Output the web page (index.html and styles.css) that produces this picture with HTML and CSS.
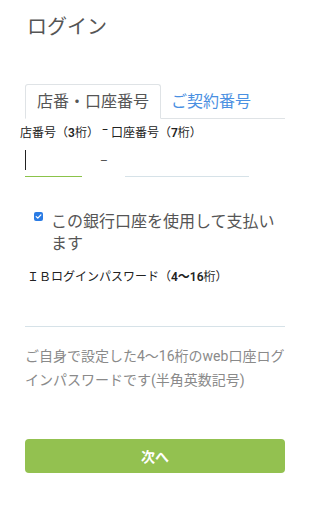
FILE: index.html
```html
<!DOCTYPE html>
<html lang="ja">
<head>
<meta charset="utf-8">
<title>ログイン</title>
<link rel="stylesheet" href="styles.css">
</head>
<body>
<main class="page">
  <h1 class="title">ログイン</h1>

  <nav class="tabs">
    <div class="tab tab-active">店番・口座番号</div>
    <div class="tab">ご契約番号</div>
  </nav>

  <div class="field-label field-label-shift">店番号（<span class="num">3</span>桁）<span class="sep">ｰ</span>口座番号（<span class="num">7</span>桁）</div>

  <div class="account-row">
    <div class="input input-branch input-focused"><span class="caret"></span></div>
    <span class="dash">–</span>
    <div class="input input-account"></div>
  </div>

  <label class="check-row">
    <span class="checkbox">
      <svg width="9" height="9" viewBox="0 0 9 9"><path d="M2.2 4.6 L3.8 6.1 L6.9 2.9" fill="none" stroke="#fff" stroke-width="1.3" stroke-linecap="round" stroke-linejoin="round"/></svg>
    </span>
    <span class="check-text">この銀行口座を使用して支払います</span>
  </label>

  <div class="field-label field-label-ib">ＩＢログインパスワード（<span class="num">4〜16</span>桁）</div>
  <div class="input input-password"></div>

  <p class="help">ご自身で設定した4〜16桁のweb口座ログインパスワードです(半角英数記号)</p>

  <button class="btn-next" type="button">次へ</button>
</main>
</body>
</html>
```

FILE: styles.css
```css
* {
  box-sizing: border-box;
}

html, body {
  margin: 0;
  padding: 0;
  background: #fff;
}

body {
  font-family: Roboto, "Noto Sans CJK JP", "Noto Sans", sans-serif;
  color: #555;
}

.page {
  width: 260px;
  margin-left: 25px;
  padding-top: 15px;
  padding-bottom: 30px;
}

.title {
  margin: 0 0 0 2px;
  font-size: 20px;
  line-height: 24px;
  font-weight: 400;
  color: #555;
}

.tabs {
  display: flex;
  margin-top: 45px;
  border-bottom: 1px solid #dfe3e6;
  height: 35px;
}

.tab {
  height: 35px;
  margin-bottom: -1px;
  padding: 0 11px 0 11px;
  font-size: 16px;
  line-height: 33px;
  color: #4a90e2;
  border: 1px solid transparent;
  border-radius: 3px 3px 0 0;
  white-space: nowrap;
}

.tab-active {
  color: #555;
  border-color: #dfe3e6 #dfe3e6 #fff;
  background: #fff;
}

.tab + .tab {
  padding-left: 9px;
}

.field-label {
  height: 14px;
  font-size: 12px;
  line-height: 14px;
  font-weight: 400;
  color: #222;
  white-space: nowrap;
}

.field-label .num {
  font-weight: 600;
}

.field-label .sep {
  display: inline-block;
  margin: 0 3px 0 3px;
  vertical-align: 3px;
}

.field-label-shift {
  margin-top: 4px;
  margin-left: -5px;
}

.account-row {
  display: flex;
  align-items: center;
  margin-top: 9px;
  height: 31px;
}

.input {
  height: 31px;
  border-bottom: 1px solid #d6e2e8;
}

.input-branch {
  width: 57px;
  display: flex;
  align-items: center;
}

.input-focused {
  border-bottom-color: #8bc34a;
}

.caret {
  display: block;
  width: 1px;
  height: 20px;
  background: #222;
  margin-top: -2px;
}

.dash {
  width: 43px;
  padding-left: 18px;
  font-size: 12px;
  color: #555;
  margin-top: -2px;
}

.input-account {
  width: 124px;
}

.check-row {
  display: flex;
  align-items: flex-start;
  margin-top: 34px;
  padding-left: 9px;
}

.checkbox {
  flex: none;
  width: 9px;
  height: 9px;
  margin-top: 1px;
  margin-right: 8px;
  border-radius: 2px;
  background: #2a7be4;
  display: flex;
}

.check-text {
  font-size: 16px;
  line-height: 22px;
  color: #555;
  width: 232px;
}

.field-label-ib {
  margin-top: 15px;
  margin-left: 2px;
}

.input-password {
  width: 260px;
  margin-top: 12px;
}

.help {
  margin: 17px 0 0;
  font-size: 14px;
  line-height: 24px;
  color: #8a8a8a;
}

.btn-next {
  display: block;
  width: 260px;
  height: 34px;
  margin-top: 47px;
  border: none;
  border-radius: 4px;
  background: #93c150;
  color: #fff;
  font-family: Roboto, "Noto Sans CJK JP", sans-serif;
  font-size: 14px;
  font-weight: 700;
  padding: 0;
}
```
